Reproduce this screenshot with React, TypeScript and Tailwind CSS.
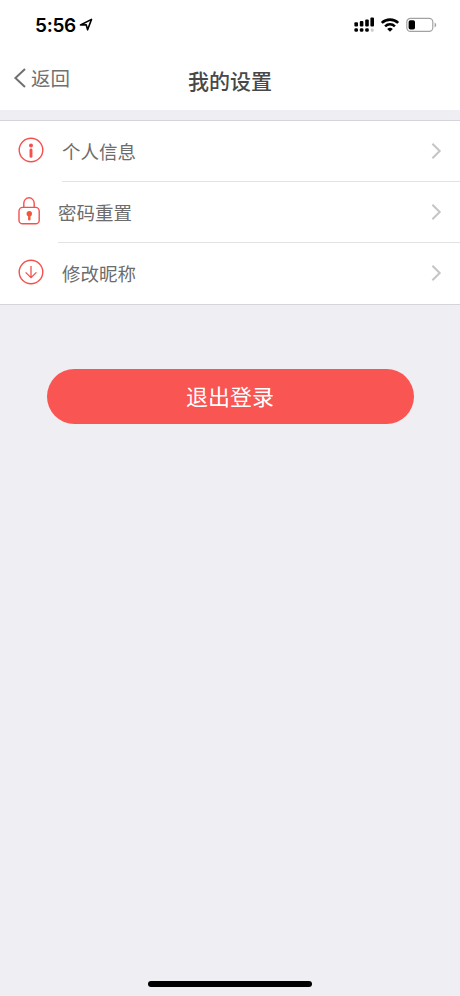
import type { ReactNode } from "react";

function InfoIcon() {
  return (
    <svg width="26" height="26" viewBox="0 0 26 26" fill="none">
      <circle cx="13" cy="13" r="11.8" stroke="#f5504e" strokeWidth="1.4" />
      <circle cx="13" cy="8.6" r="2" fill="#f5504e" />
      <path d="M13 13v6.4" stroke="#f5504e" strokeWidth="2.9" strokeLinecap="round" />
    </svg>
  );
}

function LockIcon() {
  return (
    <svg width="22" height="28" viewBox="0 0 22 28" fill="none">
      <rect x="1" y="10.4" width="20.2" height="16.4" rx="3.6" stroke="#f5504e" strokeWidth="1.4" />
      <path
        d="M5.8 10.4V6.2a5.2 5.4 0 0 1 10.4 0v4.2"
        stroke="#f5504e"
        strokeWidth="1.4"
      />
      <circle cx="11.3" cy="16.7" r="2.7" fill="#f0573a" />
      <path d="M11.3 17.5v4.8" stroke="#f0573a" strokeWidth="2.4" strokeLinecap="round" />
    </svg>
  );
}

function DownIcon() {
  return (
    <svg width="26" height="26" viewBox="0 0 26 26" fill="none">
      <circle cx="13" cy="13" r="11.8" stroke="#f5504e" strokeWidth="1.4" />
      <path d="M13 7v11.6M7.6 13.4l5.4 5.2 5.4-5.2" stroke="#f5504e" strokeWidth="1.3" />
    </svg>
  );
}

type RowProps = {
  icon: ReactNode;
  label: string;
  divider?: boolean;
};

function Row({ icon, label, divider }: RowProps) {
  return (
    <li className="flex h-[61px] gap-[18px] pl-[18px]">
      <span className="flex shrink-0 items-center pb-[3px]">{icon}</span>
      <div
        className={`flex flex-1 items-center justify-between border-b pr-[18px] ${
          divider ? "border-[#e2e2e4]" : "border-transparent"
        }`}
      >
        <span className="text-[18.5px] leading-none text-[#6c6c6c]">{label}</span>
        <svg width="11" height="18" viewBox="0 0 11 18" fill="none" className="mb-px">
          <path d="M1.4 1.8L8.7 9l-7.3 7.2" stroke="#c5c5c8" strokeWidth="2" />
        </svg>
      </div>
    </li>
  );
}

function StatusBar() {
  return (
    <div className="flex h-[50px] items-center justify-between pr-[23px] pl-[35px] text-black">
      <div className="flex items-center gap-[3px]">
        <span className="font-[Inter] text-[19px] leading-none font-semibold tracking-[-0.3px]">
          5:56
        </span>
        <svg width="14" height="14" viewBox="0 0 14 14" fill="none">
          <path
            d="M1.5 7L12.5 1.4 8.6 11.8 7.2 6.8z"
            stroke="currentColor"
            strokeWidth="1.6"
            strokeLinejoin="round"
          />
        </svg>
      </div>
      <div className="flex items-center">
        <svg width="20" height="16" viewBox="0 0 20 16" fill="currentColor">
          <rect x="0.4" y="5.2" width="3.6" height="4.2" rx="1" />
          <rect x="5.8" y="4" width="3.6" height="5.4" rx="1" />
          <rect x="11.2" y="2.4" width="3.6" height="7" rx="1" />
          <rect x="16.4" y="0.6" width="3.6" height="8.8" rx="1" />
          <rect x="0.4" y="11.2" width="3.6" height="3.6" rx="1.4" />
          <rect x="5.8" y="11.2" width="3.6" height="3.6" rx="1.4" />
          <rect x="11.2" y="11.2" width="3.6" height="3.6" rx="1.4" />
          <rect x="16.7" y="11.6" width="3" height="3.1" rx="1.2" fill="#ccc" />
        </svg>
        <svg width="20" height="16" viewBox="0 0 20 16" fill="none" className="ml-1.5">
          <path d="M1.8 5.9a11.7 11.7 0 0 1 16.4 0" stroke="currentColor" strokeWidth="2.7" />
          <path d="M5.1 9.3a7 7 0 0 1 9.8 0" stroke="currentColor" strokeWidth="2.5" />
          <path d="M7.2 12a4 4 0 0 1 5.6 0L10 14.8z" fill="currentColor" />
        </svg>
        <svg width="31" height="16" viewBox="0 0 31 16" fill="none" className="ml-[6px]">
          <rect x="0.8" y="1.4" width="26" height="13" rx="3.6" stroke="#a2a2a2" strokeWidth="1.2" />
          <rect x="2.6" y="3.2" width="6.4" height="9.4" rx="1.8" fill="currentColor" />
          <path d="M28.6 5.6v4.8c1-.4 1.6-1.3 1.6-2.4s-.6-2-1.6-2.4z" fill="#a2a2a2" />
        </svg>
      </div>
    </div>
  );
}

export default function App() {
  return (
    <div className="flex h-[996px] w-[460px] flex-col overflow-hidden bg-[#efeef3] font-['Noto_Sans_CJK_SC',sans-serif]">
      <div className="h-[110px] bg-white">
        <StatusBar />
        <header className="grid h-[60px] grid-cols-3 items-center">
          <button className="flex items-center gap-1 pb-[5px] pl-[13px] text-[#707070]">
            <svg width="14" height="20" viewBox="0 0 14 20" fill="none">
              <path d="M12 1L2.4 10 12 19" stroke="currentColor" strokeWidth="2" />
            </svg>
            <span className="text-[19.5px] leading-none">返回</span>
          </button>
          <h1 className="text-center text-[21px] leading-none font-medium text-[#484848]">我的设置</h1>
        </header>
      </div>

      <ul className="mt-[10px] border-y border-[#d5d4da] bg-white">
        <Row icon={<InfoIcon />} label="个人信息" divider />
        <Row icon={<LockIcon />} label="密码重置" divider />
        <Row icon={<DownIcon />} label="修改昵称" />
      </ul>

      <button className="mx-auto mt-16 h-[55px] w-[367px] rounded-full bg-[#f95553] pb-1 text-[22px] leading-none text-white">
        退出登录
      </button>

      <div className="mx-auto mt-auto mb-[9px] h-1.5 w-[164px] rounded-full bg-black" />
    </div>
  );
}
